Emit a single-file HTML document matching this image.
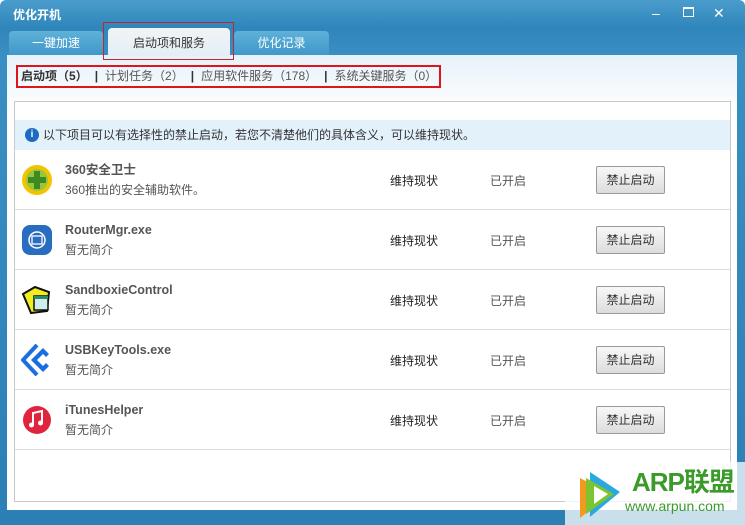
<!DOCTYPE html>
<html><head><meta charset="utf-8"><style>
*{margin:0;padding:0;box-sizing:border-box}
body{width:745px;height:525px;overflow:hidden;background:#fff;font-family:"Liberation Sans","Noto Sans CJK SC",sans-serif;font-size:12px;line-height:16px;color:#333;position:relative}
.frame{position:absolute;inset:0;background:linear-gradient(#4a9ccc,#2f86bb 28px,#3a8fc2 56px,#2c7fb5);border-radius:6px 6px 0 0}
.title{position:absolute;left:13px;top:7px;color:#fff;font-weight:bold;font-size:12px}
.ctl{position:absolute;top:5px;color:#fff;font-size:14px}
.tab{position:absolute;top:31px;height:25px;background:linear-gradient(#5eb1d8,#3f98c8);border-radius:4px 4px 0 0;color:#fff;font-size:12px;text-align:center;line-height:24px}
.tab.act{background:linear-gradient(#f2f4f6,#e3eef6);color:#333;top:28px;height:28px;line-height:30px}
.content{position:absolute;left:7px;top:55px;width:730px;height:455px;background:linear-gradient(#e6f2fa,#fafcfd 45px,#fff 60px)}
.sub{position:absolute;left:21px;top:68px;color:#555;white-space:nowrap;font-size:12px}
.sub b{color:#333}
.sep{font-weight:bold;color:#333;margin:0 7px}
.panel{position:absolute;left:14px;top:101px;width:717px;height:401px;border:1px solid #c9c9c9;background:#fff}
.info{position:absolute;left:0;top:18px;width:715px;height:30px;background:#e3f1fb;line-height:30px;padding-left:28px;color:#333}
.info i{position:absolute;left:10px;top:8px;width:14px;height:14px;border-radius:50%;background:#1d6bc2;color:#fff;font-style:normal;font-weight:bold;font-size:10px;line-height:14px;text-align:center}
.row{position:absolute;left:0;width:715px;height:60px;border-bottom:1px solid #dcdcdc}
.nm{position:absolute;left:50px;top:12px;font-weight:bold;color:#555;font-size:12.5px;line-height:16px}
.ds{position:absolute;left:50px;top:32px;color:#555;line-height:16px}
.c1{position:absolute;left:375px;top:23px;color:#222;line-height:16px}
.c2{position:absolute;left:475px;top:23px;color:#555;line-height:16px}
.btn{position:absolute;left:581px;top:16px;width:69px;height:28px;border:1px solid #9a9a9a;border-radius:2px;background:linear-gradient(#f8f8f8,#dcdcdc);text-align:center;line-height:26px;color:#333}
.ic{position:absolute;left:6px;top:14px;width:32px;height:32px}
.red{position:absolute;border:2px solid #e0141a}
</style></head><body>
<div class="frame"></div>
<div class="title">优化开机</div>
<div class="ctl" style="left:652px">–</div>
<div class="ctl" style="left:683px;top:7px;width:11px;height:10px;border:1.5px solid #fff;border-top-width:2px"></div>
<div class="ctl" style="left:713px">✕</div>
<div class="tab" style="left:9px;width:94px">一键加速</div>
<div class="tab" style="left:234px;width:95px">优化记录</div>
<div class="content"></div>
<div class="tab act" style="left:108px;width:122px">启动项和服务</div>
<div class="red" style="left:103px;top:22px;width:131px;height:38px;border-width:1px;border-color:#c0262a"></div>
<div class="sub"><b>启动项（5）</b><span class="sep">|</span>计划任务（2）<span class="sep">|</span>应用软件服务（178）<span class="sep">|</span>系统关键服务（0）</div>
<div class="red" style="left:16px;top:65px;width:425px;height:23px"></div>
<div class="panel">
<div class="info"><i>i</i>以下项目可以有选择性的禁止启动，若您不清楚他们的具体含义，可以维持现状。</div>
<div class="row" style="top:48px"><svg class="ic" viewBox="0 0 32 32"><circle cx="16" cy="16" r="15" fill="#f2c400"/><circle cx="16" cy="16" r="11" fill="#9bc43a"/><path d="M13 7h6v6h6v6h-6v6h-6v-6H7v-6h6z" fill="#3e8a22"/></svg><div class="nm">360安全卫士</div><div class="ds">360推出的安全辅助软件。</div><div class="c1">维持现状</div><div class="c2">已开启</div><div class="btn">禁止启动</div></div>
<div class="row" style="top:108px"><svg class="ic" viewBox="0 0 32 32"><rect x="1" y="1" width="30" height="30" rx="8" fill="#2a6cbf"/><circle cx="16" cy="16" r="8" fill="none" stroke="#fff" stroke-width="1.5"/><rect x="11" y="12" width="10" height="8" fill="none" stroke="#fff" stroke-width="1.3"/></svg><div class="nm">RouterMgr.exe</div><div class="ds">暂无简介</div><div class="c1">维持现状</div><div class="c2">已开启</div><div class="btn">禁止启动</div></div>
<div class="row" style="top:168px"><svg class="ic" viewBox="0 0 32 32"><path d="M2 10L14 3 28 8 26 27 10 29z" fill="#f0ee20" stroke="#111" stroke-width="2"/><rect x="13" y="12" width="14" height="14" fill="#cfeeee" stroke="#111" stroke-width="1.5"/><rect x="13" y="12" width="14" height="3" fill="#2a8a6a"/></svg><div class="nm">SandboxieControl</div><div class="ds">暂无简介</div><div class="c1">维持现状</div><div class="c2">已开启</div><div class="btn">禁止启动</div></div>
<div class="row" style="top:228px"><svg class="ic" viewBox="0 0 32 32"><path d="M22 4L10 16l12 12 6-6-3-3-3 3-6-6 6-6 3 3 3-3z" fill="#1a6fe0"/><path d="M16 1L2 16l14 15" fill="none" stroke="#1a6fe0" stroke-width="4"/></svg><div class="nm">USBKeyTools.exe</div><div class="ds">暂无简介</div><div class="c1">维持现状</div><div class="c2">已开启</div><div class="btn">禁止启动</div></div>
<div class="row" style="top:288px"><svg class="ic" viewBox="0 0 32 32"><circle cx="16" cy="16" r="14" fill="#e0243e"/><path d="M12 21V9l9-2v12" fill="none" stroke="#fff" stroke-width="2"/><circle cx="10.5" cy="21" r="2.5" fill="#fff"/><circle cx="19.5" cy="19" r="2.5" fill="#fff"/></svg><div class="nm">iTunesHelper</div><div class="ds">暂无简介</div><div class="c1">维持现状</div><div class="c2">已开启</div><div class="btn">禁止启动</div></div>
</div>
<div style="position:absolute;left:565px;top:462px;width:180px;height:63px;background:rgba(255,255,255,.75)"></div>
<svg style="position:absolute;left:570px;top:462px" width="60" height="62" viewBox="0 0 60 62"><path d="M20 10L50 30 20 55z" fill="#2aa8e0"/><path d="M10 16L40 32 10 56z" fill="#f29a20"/><path d="M16 16L44 32 16 52z" fill="#7cc430"/><path d="M24 24L38 32 24 42z" fill="#fff"/></svg>
<div style="position:absolute;left:632px;top:467px;color:#3a9a2a;font-weight:bold;font-size:26px;line-height:30px;letter-spacing:-1px">ARP联盟</div>
<div style="position:absolute;left:625px;top:498px;color:#3a9a2a;font-size:14px">www.arpun.com</div>
</body></html>
